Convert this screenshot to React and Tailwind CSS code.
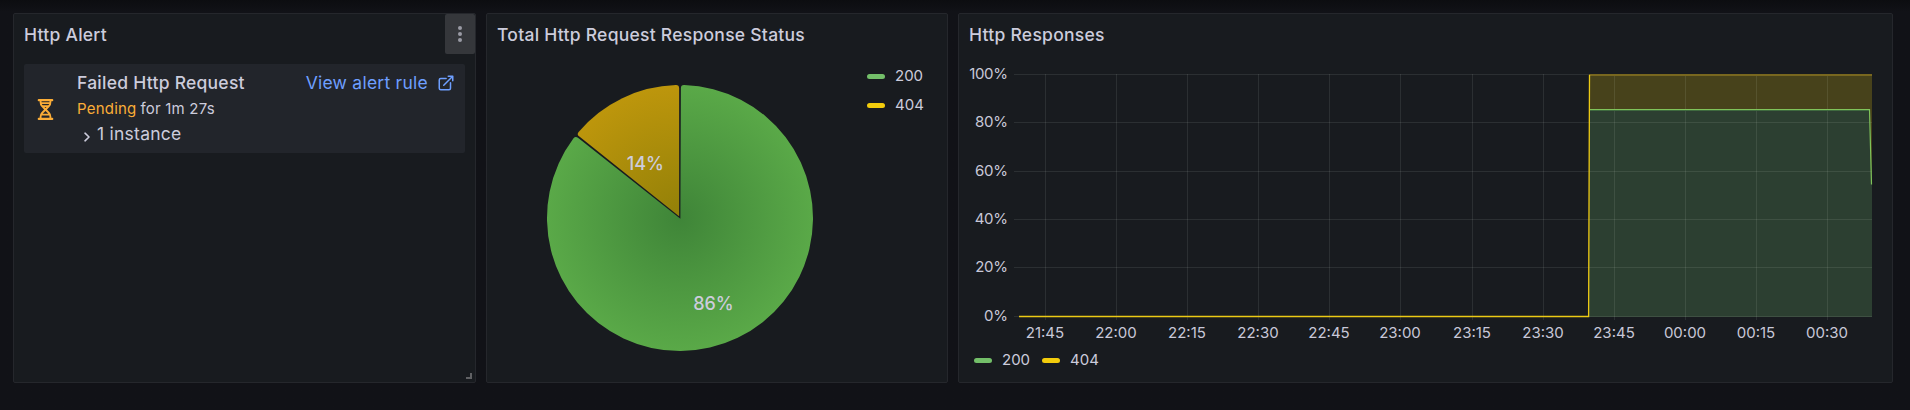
const FONT = 'font-["Inter",sans-serif]';

function Panel({ title, className, menu, children }) {
  return (
    <section
      className={`relative flex h-[370px] shrink-0 flex-col rounded-[2px] border border-[#25272c] bg-[#181b1f] ${className}`}
    >
      <header className="flex h-10 shrink-0 items-center justify-between pl-[10px]">
        <h2 className="text-[17.5px] leading-[27px] font-medium tracking-[0.26px] whitespace-nowrap text-[#ccccdc]">
          {title}
        </h2>
        {menu}
      </header>
      {children}
    </section>
  );
}

function MenuButton() {
  return (
    <button className="flex h-10 w-[30px] flex-col items-center justify-center gap-[2px] rounded-[2px] bg-[#35373b]" aria-label="Menu">
      <span className="size-1 rounded-full bg-[#9a9ba5]" />
      <span className="size-1 rounded-full bg-[#9a9ba5]" />
      <span className="size-1 rounded-full bg-[#9a9ba5]" />
    </button>
  );
}

function Hourglass() {
  return (
    <svg viewBox="0 0 24 24" className="mt-[2px] size-[25px] fill-[#fbad37]">
      <path
        fillRule="evenodd"
        d="M17.6 5.09V4h.9a1 1 0 0 0 0-2H5.5a1 1 0 0 0 0 2h.9v1.09a6 6 0 0 0 1.7 4.3L10.6 12l-2.5 2.61A6 6 0 0 0 6.4 18.91V20H5.5a1 1 0 0 0 0 2h13a1 1 0 0 0 0-2h-.9v-1.09a6 6 0 0 0-1.7-4.3L13.4 12l2.5-2.61A6 6 0 0 0 17.6 5.09ZM8.2 4h7.6v1H8.2ZM8.5 6.8h7a4 4 0 0 1-.8 1.2H9.3a4 4 0 0 1-.8-1.2ZM11 9.6h2L12 10.6ZM12 13.4l2.7 2.6H9.3ZM8.4 17.7h7.2L15.8 18.9V20H8.2v-1.1Z"
      />
    </svg>
  );
}

function ExternalLink() {
  return (
    <svg viewBox="0 0 24 24" className="mb-[2px] size-[18px] fill-[#6e9fff]">
      <path d="M18,10.82a1,1,0,0,0-1,1V19a1,1,0,0,1-1,1H5a1,1,0,0,1-1-1V8A1,1,0,0,1,5,7h7.18a1,1,0,0,0,0-2H5A3,3,0,0,0,2,8V19a3,3,0,0,0,3,3H16a3,3,0,0,0,3-3V11.82A1,1,0,0,0,18,10.82Zm3.92-8.2a1,1,0,0,0-.54-.54A1,1,0,0,0,21,2H15a1,1,0,0,0,0,2h3.59L8.29,14.29a1,1,0,0,0,0,1.42,1,1,0,0,0,1.42,0L20,5.41V9a1,1,0,0,0,2,0V3A1,1,0,0,0,21.92,2.62Z" />
    </svg>
  );
}

function AlertPanel() {
  return (
    <Panel title="Http Alert" className="w-[463px]" menu={<MenuButton />}>
      <div className="mx-[10px] mt-[10px] flex h-[89px] items-center rounded-[2px] bg-[#22252b] text-[#ccccdc]">
        <div className="flex w-[53px] shrink-0 items-center pl-[9px]">
          <Hourglass />
        </div>
        <div className="flex flex-1 flex-col pr-[10px]">
          <div className="flex h-[27px] items-center justify-between text-[17.5px] tracking-[0.25px]">
            <span className="font-medium">Failed Http Request</span>
            <a className="flex items-center gap-[9px] text-[#6e9fff]">
              View alert rule
              <ExternalLink />
            </a>
          </div>
          <div className="flex h-[25px] items-center gap-1 text-[15px] tracking-[0.21px]">
            <span className="text-[#fbad37]">Pending</span>
            <span>for 1m 27s</span>
          </div>
          <div className="flex h-[25px] items-center pl-[6px] text-[17.5px] tracking-[0.25px]">
            <svg viewBox="0 0 8 12" className="mt-1 mr-[6px] h-[12px] w-[8px] fill-none stroke-[#ccccdc] stroke-[1.6]">
              <path d="M2 2.2 6 6 2 9.8" strokeLinecap="round" strokeLinejoin="round" />
            </svg>
            1 instance
          </div>
        </div>
      </div>
      <span className="absolute right-[3px] bottom-[3px] size-[6px] border-r-2 border-b-2 border-[#606164]" />
    </Panel>
  );
}

function LegendItem({ label, swatch }) {
  return (
    <div className="flex items-center gap-[10px] text-[15px] leading-[22px] text-[#ccccdc]">
      <span className={`h-[5px] w-[18px] rounded-full ${swatch}`} />
      {label}
    </div>
  );
}

const R = 133;
const point = (angle, r, dx = 0, dy = 0) =>
  `${(r * Math.sin(angle) + dx).toFixed(3)} ${(-r * Math.cos(angle) + dy).toFixed(3)}`;

// Pie slice with rounded outer corners and an edge inset that leaves a gap.
function slicePath(start, end, gap = 0.9, corner = 3.2) {
  const big = end - start > Math.PI ? 1 : 0;
  const half = (end - start) / 2;
  const mid = start + half;
  const apex = big ? point(mid, 0.9) : point(mid, gap / Math.sin(half));
  const sx = gap * Math.cos(start);
  const sy = gap * Math.sin(start);
  const ex = -gap * Math.cos(end);
  const ey = -gap * Math.sin(end);
  const turn = (gap + corner) / R;
  return [
    `M${apex}`,
    `L${point(start, R - corner, sx, sy)}`,
    `Q${point(start, R, sx, sy)} ${point(start + turn, R)}`,
    `A${R} ${R} 0 ${big} 1 ${point(end - turn, R)}`,
    `Q${point(end, R, ex, ey)} ${point(end, R - corner, ex, ey)}`,
    "Z",
  ].join(" ");
}

const SPLIT = (Math.PI * 2 * 6) / 7;

function PiePanel() {
  return (
    <Panel title="Total Http Request Response Status" className="w-[462px]">
      <div className="flex flex-1 pl-[10px]">
        <svg width="366" height="328" viewBox="-183 -164 366 328" className="shrink-0">
          <defs>
            <radialGradient id="ok" gradientUnits="userSpaceOnUse" cx="0" cy="0" r="133">
              <stop offset="0" stopColor="#3f8538" />
              <stop offset="1" stopColor="#5aa948" />
            </radialGradient>
            <radialGradient id="missing" gradientUnits="userSpaceOnUse" cx="0" cy="0" r="133">
              <stop offset="0" stopColor="#928008" />
              <stop offset="1" stopColor="#bd960c" />
            </radialGradient>
          </defs>
          <path d={slicePath(0, SPLIT)} fill="url(#ok)" />
          <path d={slicePath(SPLIT, Math.PI * 2)} fill="url(#missing)" />
          <g className={`${FONT} fill-[#ccccdc] text-[18px] font-medium`} textAnchor="middle">
            <text x="-34.6" y="-48">14%</text>
            <text x="33.4" y="92">86%</text>
          </g>
        </svg>
        <div className="flex flex-col gap-[7px] pt-[11px] pl-[4px]">
          <LegendItem label="200" swatch="bg-[#73bf69]" />
          <LegendItem label="404" swatch="bg-[#f2cc0c]" />
        </div>
      </div>
    </Panel>
  );
}

const ROWS = [
  ["100%", 74],
  ["80%", 122],
  ["60%", 171],
  ["40%", 219],
  ["20%", 267],
  ["0%", 316],
];
const COLUMNS = [
  ["21:45", 1045],
  ["22:00", 1116],
  ["22:15", 1187],
  ["22:30", 1258],
  ["22:45", 1329],
  ["23:00", 1400],
  ["23:15", 1472],
  ["23:30", 1543],
  ["23:45", 1614],
  ["00:00", 1685],
  ["00:15", 1756],
  ["00:30", 1827],
];

function ResponsesPanel() {
  return (
    <Panel title="Http Responses" className="w-[935px]">
      <svg width="933" height="292" viewBox="959 54 933 292" className="shrink-0">
        <path d="M1588.5 317 1589.5 74H1872V317Z" fill="#f2cc0c" fillOpacity="0.22" />
        <path d="M1589 317V109H1869.5L1872 184V317Z" fill="#2c3f31" />
        <g fill="#f0faf0" fillOpacity="0.09">
          {ROWS.map(([label, y]) => (
            <rect key={label} x="1014" y={y} width="858" height="1" />
          ))}
          {COLUMNS.map(([label, x]) => (
            <rect key={label} x={x} y="74" width="1" height="246" />
          ))}
        </g>
        <rect x="1589" y="74" width="283" height="2" fill="#78671f" />
        <path d="M1590 110.5H1869" stroke="#3f6a3f" fill="none" />
        <path d="M1589 109.5H1869.5L1871.5 184.5" stroke="#7fc35a" fill="none" strokeWidth="1.2" />
        <path d="M1019 316.5H1588.6L1589.5 75" stroke="#ecca14" fill="none" strokeWidth="1.3" />
        <g className={`${FONT} fill-[#c8c8d8] text-[15px]`}>
          {ROWS.map(([label, y]) => (
            <text key={label} x="1007.7" y={y + 4.5} textAnchor="end" className="tracking-[-0.3px]">
              {label}
            </text>
          ))}
          {COLUMNS.map(([label, x]) => (
            <text key={label} x={x} y="338" textAnchor="middle">
              {label}
            </text>
          ))}
        </g>
      </svg>
      <div className="flex gap-3 pt-[3px] pl-[15px]">
        <LegendItem label="200" swatch="bg-[#73bf69]" />
        <LegendItem label="404" swatch="bg-[#f2cc0c]" />
      </div>
    </Panel>
  );
}

export default function App() {
  return (
    <main
      className={`flex h-[410px] w-[1910px] gap-[10px] overflow-hidden bg-[#111217] bg-linear-to-b from-[#0c0d10] to-[#111217] to-[12px] pt-[13px] pl-[13px] ${FONT}`}
    >
      <AlertPanel />
      <PiePanel />
      <ResponsesPanel />
    </main>
  );
}
